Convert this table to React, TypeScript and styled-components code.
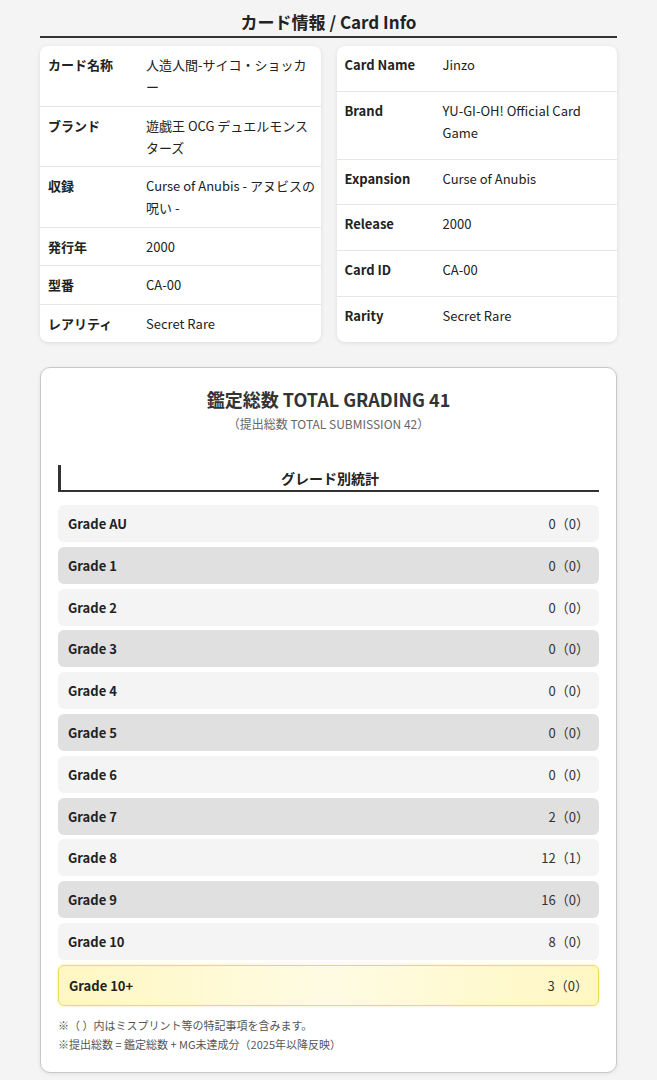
import styled, { createGlobalStyle } from "styled-components";

const GlobalStyle = createGlobalStyle`
  body {
    margin: 0;
    background: #f4f4f4;
    font-family: "Noto Sans CJK JP", "Noto Sans", sans-serif;
    color: #222;
  }
`;

const infoJa: [string, string][] = [
  ["カード名称", "人造人間-サイコ・ショッカー"],
  ["ブランド", "遊戯王 OCG デュエルモンスターズ"],
  ["収録", "Curse of Anubis - アヌビスの呪い -"],
  ["発行年", "2000"],
  ["型番", "CA-00"],
  ["レアリティ", "Secret Rare"],
];

const infoEn: [string, string][] = [
  ["Card Name", "Jinzo"],
  ["Brand", "YU-GI-OH! Official Card Game"],
  ["Expansion", "Curse of Anubis"],
  ["Release", "2000"],
  ["Card ID", "CA-00"],
  ["Rarity", "Secret Rare"],
];

const grades: [string, string][] = [
  ["Grade AU", "0（0）"],
  ["Grade 1", "0（0）"],
  ["Grade 2", "0（0）"],
  ["Grade 3", "0（0）"],
  ["Grade 4", "0（0）"],
  ["Grade 5", "0（0）"],
  ["Grade 6", "0（0）"],
  ["Grade 7", "2（0）"],
  ["Grade 8", "12（1）"],
  ["Grade 9", "16（0）"],
  ["Grade 10", "8（0）"],
];

const InfoTable = ({ rows }: { rows: [string, string][] }) => (
  <InfoCard>
    {rows.map(([k, v]) => (
      <InfoRow key={k}>
        <InfoLabel>{k}</InfoLabel>
        <InfoValue>{v}</InfoValue>
      </InfoRow>
    ))}
  </InfoCard>
);

const App = () => {
  return (
    <Page>
      <GlobalStyle />
      <SectionTitle>カード情報 / Card Info</SectionTitle>
      <InfoGrid>
        <InfoTable rows={infoJa} />
        <InfoTable rows={infoEn} />
      </InfoGrid>

      <StatsCard>
        <StatsTitle>鑑定総数 TOTAL GRADING 41</StatsTitle>
        <StatsSub>（提出総数 TOTAL SUBMISSION 42）</StatsSub>
        <SubHeading>グレード別統計</SubHeading>
        <GradeList>
          {grades.map(([g, n], i) => (
            <GradeRow key={g} $dark={i % 2 === 1}>
              <span>{g}</span>
              <GradeCount>{n}</GradeCount>
            </GradeRow>
          ))}
          <GradeRow $gold>
            <span>Grade 10+</span>
            <GradeCount>3（0）</GradeCount>
          </GradeRow>
        </GradeList>
        <Notes>
          <p>※（ ）内はミスプリント等の特記事項を含みます。</p>
          <p>※提出総数 = 鑑定総数 + MG未達成分（2025年以降反映）</p>
        </Notes>
      </StatsCard>
    </Page>
  );
};

const Page = styled.div`
  padding: 9px 40px 10px;
`;

const SectionTitle = styled.h2`
  margin: 0;
  text-align: center;
  font-size: 17px;
  font-weight: 700;
  line-height: 26px;
  padding-bottom: 1px;
  border-bottom: 2px solid #333;
`;

const InfoGrid = styled.div`
  display: grid;
  grid-template-columns: 1fr 1fr;
  gap: 16px;
  margin-top: 8px;
`;

const InfoCard = styled.div`
  display: flex;
  flex-direction: column;
  background: #fff;
  border-radius: 8px;
  box-shadow: 0 1px 4px rgba(0, 0, 0, 0.1);
  overflow: hidden;
`;

const InfoRow = styled.div`
  flex: 1 1 auto;
  display: flex;
  align-items: flex-start;
  padding: 8px 4px 7.5px 8px;
  font-size: 13px;
  line-height: 22px;
  border-bottom: 1px solid #e6e6e6;

  &:last-child {
    border-bottom: none;
  }
`;

const InfoLabel = styled.div`
  flex: 0 0 98px;
  font-weight: 700;
`;

const InfoValue = styled.div`
  flex: 1;
`;

const StatsCard = styled.div`
  margin-top: 25px;
  background: #fff;
  border: 1px solid #c8c8c8;
  border-radius: 10px;
  box-shadow: 0 1px 4px rgba(0, 0, 0, 0.08);
  padding: 18px 17px 18px;
`;

const StatsTitle = styled.h3`
  margin: 0;
  text-align: center;
  font-size: 18px;
  font-weight: 700;
  line-height: 26px;
  color: #333;
`;

const StatsSub = styled.div`
  text-align: center;
  font-size: 12px;
  line-height: 18px;
  color: #666;
  margin-top: 3px;
`;

const SubHeading = styled.h4`
  margin: 32px 0 0;
  text-align: center;
  font-size: 14px;
  font-weight: 700;
  line-height: 22px;
  padding: 2px 0 1px;
  border-left: 3px solid #333;
  border-bottom: 2px solid #333;
`;

const GradeList = styled.div`
  display: flex;
  flex-direction: column;
  gap: 4.8px;
  margin-top: 13px;
`;

const GradeRow = styled.div<{ $dark?: boolean; $gold?: boolean }>`
  display: flex;
  justify-content: space-between;
  align-items: center;
  height: ${(p) => (p.$gold ? "39px" : "37px")};
  padding: 0 10px;
  border-radius: 6px;
  font-size: 13px;
  font-weight: 700;
  background: ${(p) =>
    p.$gold
      ? "linear-gradient(90deg, #fff7c2, #fffbe3 50%, #fff7c2)"
      : p.$dark
      ? "#e0e0e0"
      : "#f4f4f4"};
  border: ${(p) => (p.$gold ? "1.5px solid #eedb55" : "none")};
  box-shadow: ${(p) => (p.$gold ? "0 0 3px rgba(238, 219, 85, 0.5)" : "none")};
`;

const GradeCount = styled.span`
  font-weight: 400;
  color: #333;
`;

const Notes = styled.div`
  margin-top: 10px;
  font-size: 11px;
  line-height: 19px;
  color: #555;

  p {
    margin: 0;
  }
`;

export default App;
